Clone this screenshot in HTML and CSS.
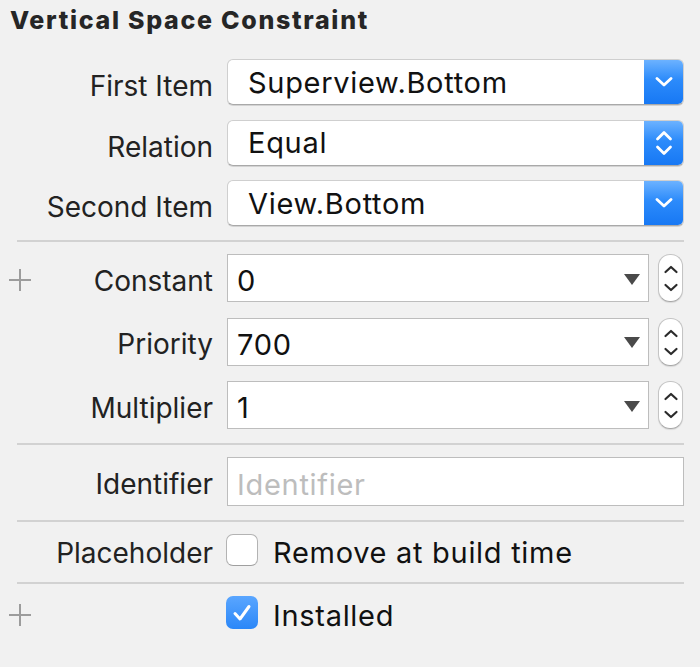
FILE: index.html
```html
<!DOCTYPE html>
<html>
<head>
<meta charset="utf-8">
<link rel="stylesheet" href="styles.css">
</head>
<body>
<div class="panel">
  <h1 class="title">Vertical Space Constraint</h1>

  <div class="group popups">
    <div class="row r46">
      <div class="label"><span>First Item</span></div>
      <div class="popup">
        <span class="value">Superview.Bottom</span>
        <span class="pbtn"><svg width="18" height="10" viewBox="0 0 18 10"><path d="M2 1.5 L9 8 L16 1.5" fill="none" stroke="#fff" stroke-width="2.8" stroke-linecap="round" stroke-linejoin="round"/></svg></span>
      </div>
    </div>
    <div class="row r46">
      <div class="label"><span>Relation</span></div>
      <div class="popup">
        <span class="value">Equal</span>
        <span class="pbtn"><svg width="18" height="26" viewBox="0 0 18 26"><path d="M2.5 9 L9 2.5 L15.5 9 M2.5 17 L9 23.5 L15.5 17" fill="none" stroke="#fff" stroke-width="2.8" stroke-linecap="round" stroke-linejoin="round"/></svg></span>
      </div>
    </div>
    <div class="row r46">
      <div class="label"><span>Second Item</span></div>
      <div class="popup">
        <span class="value">View.Bottom</span>
        <span class="pbtn"><svg width="18" height="10" viewBox="0 0 18 10"><path d="M2 1.5 L9 8 L16 1.5" fill="none" stroke="#fff" stroke-width="2.8" stroke-linecap="round" stroke-linejoin="round"/></svg></span>
      </div>
    </div>
  </div>

  <div class="sep"></div>

  <div class="group combos">
    <div class="row r48">
      <div class="label"><svg class="plus" width="22" height="22" viewBox="0 0 22 22"><path d="M11 0 V22 M0 11 H22" stroke="#9c9c9c" stroke-width="2"/></svg><span>Constant</span></div>
      <div class="ctrl">
        <div class="combo"><span class="value">0</span><span class="tri"></span></div>
        <div class="stepper"><svg width="16" height="40" viewBox="0 0 16 40"><path d="M2.5 14 L8 9 L13.5 14 M2.5 27 L8 32 L13.5 27" fill="none" stroke="#2b2b2b" stroke-width="2.2" stroke-linecap="round" stroke-linejoin="round"/></svg></div>
      </div>
    </div>
    <div class="row r48">
      <div class="label"><span>Priority</span></div>
      <div class="ctrl">
        <div class="combo"><span class="value">700</span><span class="tri"></span></div>
        <div class="stepper"><svg width="16" height="40" viewBox="0 0 16 40"><path d="M2.5 14 L8 9 L13.5 14 M2.5 27 L8 32 L13.5 27" fill="none" stroke="#2b2b2b" stroke-width="2.2" stroke-linecap="round" stroke-linejoin="round"/></svg></div>
      </div>
    </div>
    <div class="row r48">
      <div class="label"><span>Multiplier</span></div>
      <div class="ctrl">
        <div class="combo"><span class="value">1</span><span class="tri"></span></div>
        <div class="stepper"><svg width="16" height="40" viewBox="0 0 16 40"><path d="M2.5 14 L8 9 L13.5 14 M2.5 27 L8 32 L13.5 27" fill="none" stroke="#2b2b2b" stroke-width="2.2" stroke-linecap="round" stroke-linejoin="round"/></svg></div>
      </div>
    </div>
  </div>

  <div class="sep"></div>

  <div class="group single">
    <div class="row r49">
      <div class="label"><span>Identifier</span></div>
      <div class="textfield"><span class="placeholder">Identifier</span></div>
    </div>
  </div>

  <div class="sep"></div>

  <div class="group single">
    <div class="row r32">
      <div class="label"><span>Placeholder</span></div>
      <div class="check-line"><span class="box"></span><span class="ctext">Remove at build time</span></div>
    </div>
  </div>

  <div class="sep sep-last"></div>

  <div class="group single">
    <div class="row r33">
      <div class="label"><svg class="plus" width="22" height="22" viewBox="0 0 22 22"><path d="M11 0 V22 M0 11 H22" stroke="#9c9c9c" stroke-width="2"/></svg></div>
      <div class="check-line"><span class="box on"><svg width="22" height="20" viewBox="0 0 22 20"><path d="M4 10.5 L9 16 L18 3.5" fill="none" stroke="#fff" stroke-width="3" stroke-linecap="round" stroke-linejoin="round"/></svg></span><span class="ctext">Installed</span></div>
    </div>
  </div>
</div>
</body>
</html>
```

FILE: styles.css
```css
html, body {
  margin: 0;
  padding: 0;
  background: #f1f1f1;
}
body {
  font-family: "Inter", "Liberation Sans", sans-serif;
  color: #1c1c1c;
  width: 700px;
  height: 667px;
  overflow: hidden;
}
.panel {
  padding-right: 16px;
}
.title {
  margin: 0;
  height: 40px;
  line-height: 40px;
  padding-left: 10px;
  font-size: 25px;
  font-weight: 800;
  letter-spacing: 1.7px;
  color: #262626;
}
.group {
  display: flex;
  flex-direction: column;
}
.popups {
  padding-top: 19px;
  gap: 14.5px;
  padding-bottom: 14px;
}
.combos {
  padding-top: 12px;
  gap: 15.5px;
  padding-bottom: 14px;
}
.single {
  padding-top: 12px;
  padding-bottom: 14px;
}
.row {
  display: flex;
  align-items: center;
  gap: 14px;
}
.r46 { height: 46px; }
.r48 { height: 48px; }
.r49 { height: 49px; }
.r32 { height: 32px; }
.r33 { height: 33px; }
.label {
  width: 213px;
  flex: none;
  display: flex;
  align-items: center;
  justify-content: flex-end;
  position: relative;
  font-size: 28px;
  color: #222;
  padding-top: 5px;
  box-sizing: border-box;
}
.popups .label {
  padding-top: 8px;
}
.plus {
  position: absolute;
  left: 9px;
  top: 50%;
  margin-top: -9px;
}
.popup {
  flex: 1;
  height: 46px;
  box-sizing: border-box;
  background: #fff;
  border: 1px solid #cfcfcf;
  border-bottom-color: #a9a9a9;
  border-radius: 6px;
  box-shadow: 0 1px 0 rgba(0,0,0,0.12);
  display: flex;
  align-items: center;
  overflow: hidden;
}
.popup .value {
  flex: 1;
  padding-left: 20px;
  font-size: 29px;
  letter-spacing: 0.7px;
  color: #111;
}
.pbtn {
  width: 39px;
  height: 100%;
  flex: none;
  background: linear-gradient(#6cb2ff, #2c8bfb 45%, #1778f4);
  display: flex;
  align-items: center;
  justify-content: center;
}
.ctrl {
  flex: 1;
  display: flex;
  align-items: center;
  gap: 9px;
  height: 100%;
}
.combo {
  flex: 1;
  height: 48px;
  box-sizing: border-box;
  background: #fff;
  border: 1px solid #bdbdbd;
  display: flex;
  align-items: center;
}
.combo .value, .textfield .placeholder {
  flex: 1;
  padding-left: 9px;
  padding-top: 5px;
  font-size: 29px;
  letter-spacing: 0.7px;
  color: #111;
}
.tri {
  width: 0;
  height: 0;
  border-left: 8.5px solid transparent;
  border-right: 8.5px solid transparent;
  border-top: 11px solid #4a4a4a;
  margin-right: 8px;
  margin-top: 2px;
}
.stepper {
  width: 25px;
  height: 48px;
  box-sizing: border-box;
  flex: none;
  background: #fff;
  border: 1px solid #c4c4c4;
  border-bottom-color: #a8a8a8;
  border-radius: 12px;
  box-shadow: 0 1px 1px rgba(0,0,0,0.1);
  display: flex;
  align-items: center;
  justify-content: center;
  margin-right: 1px;
}
.textfield {
  flex: 1;
  height: 49px;
  box-sizing: border-box;
  background: #fff;
  border: 1px solid #bdbdbd;
  display: flex;
  align-items: center;
}
.textfield .placeholder {
  color: #bdbdbd;
}
.check-line {
  display: flex;
  align-items: center;
  gap: 15px;
  margin-left: -1px;
}
.box {
  width: 32px;
  height: 32px;
  box-sizing: border-box;
  border: 1px solid #b3b3b3;
  border-bottom-color: #9f9f9f;
  border-radius: 7px;
  background: #fff;
  display: flex;
  align-items: center;
  justify-content: center;
  flex: none;
}
.box.on {
  border: none;
  background: linear-gradient(#5aa6ff, #2b87f8);
  height: 33px;
}
.ctext {
  font-size: 29px;
  letter-spacing: 0.7px;
  color: #111;
  padding-top: 5px;
}
.sep {
  height: 2px;
  margin-left: 17px;
  background: #d2d2d2;
}
.sep-last {
  margin-top: 2px;
}
```
